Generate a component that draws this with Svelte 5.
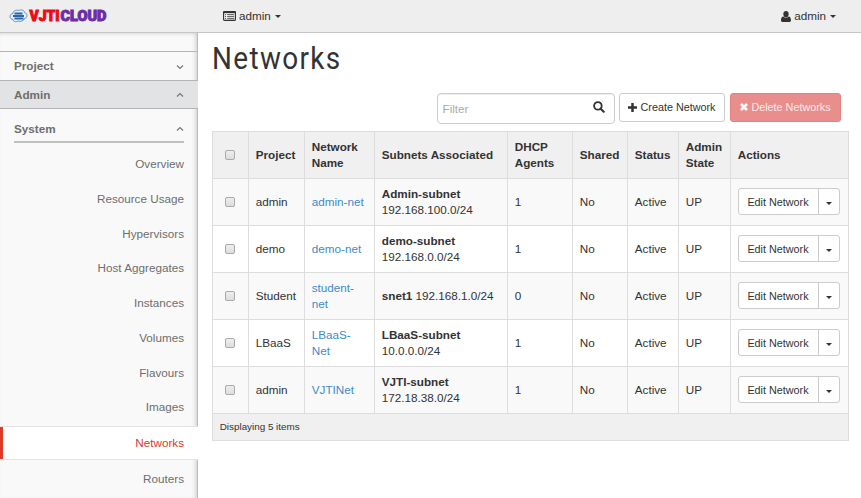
<script>
  const items = ['Overview', 'Resource Usage', 'Hypervisors', 'Host Aggregates', 'Instances', 'Volumes', 'Flavours', 'Images', 'Networks', 'Routers'];
  const widths = [36, 56, 70, 133, 65, 55, 51, 52, 118];
  const heads = ['Project', 'Network Name', 'Subnets Associated', 'DHCP Agents', 'Shared', 'Status', 'Admin State', 'Actions'];
  const rows = [
    { project: 'admin', name: 'admin-net', subnet: 'Admin-subnet', ip: '192.168.100.0/24', agents: 1 },
    { project: 'demo', name: 'demo-net', subnet: 'demo-subnet', ip: '192.168.0.0/24', agents: 1 },
    { project: 'Student', name: 'student-net', subnet: 'snet1', ip: '192.168.1.0/24', agents: 0 },
    { project: 'LBaaS', name: 'LBaaS-Net', subnet: 'LBaaS-subnet', ip: '10.0.0.0/24', agents: 1 },
    { project: 'admin', name: 'VJTINet', subnet: 'VJTI-subnet', ip: '172.18.38.0/24', agents: 1 }
  ];
</script>

{#snippet chevron(up)}
  <svg class="chev" width="8" height="6" viewBox="0 0 8 6"><path d={up ? 'M1 4.5 L4 1.5 L7 4.5' : 'M1 1.5 L4 4.5 L7 1.5'} /></svg>
{/snippet}

<div class="page">
  <header>
    <svg class="logo" width="100" height="24" viewBox="0 0 100 24">
      <path class="cloud" d="M4 15.5 C0 15 0 10 4 9.5 C4 7 7 5.5 9.5 6.5 C12.5 5 15.5 6.5 15.5 8.5 C19 9.5 18.5 14 15.5 14.5 C15 17 11 18 9 17 C7 18.5 4 17.5 4 15.5 Z" />
      <path class="lines" d="M5.5 9.5h8 M4 12h11 M5.5 14.5h9" />
      <text x="20.5" y="17.3" textLength="30" lengthAdjust="spacingAndGlyphs" fill="#f00812" stroke="#f00812">VJTI</text>
      <text x="51.5" y="17.3" textLength="46" lengthAdjust="spacingAndGlyphs" fill="#6c2da5" stroke="#6c2da5">CLOUD</text>
    </svg>
    <div class="tenant">
      <svg width="13" height="10" viewBox="0 0 13 10"><rect x=".6" y=".6" width="11.8" height="8.8" rx="1" fill="#fff" stroke="#333" stroke-width="1.2" /><path d="M0 1.3h13" stroke="#333" stroke-width="1.8" /><path d="M2 3.7h1.2M4.2 3.7h7M2 5.7h1.2M4.2 5.7h7M2 7.7h1.2M4.2 7.7h7" stroke="#333" stroke-width=".9" /></svg>
      <span>admin</span><i class="caret"></i>
    </div>
    <div class="user">
      <svg width="10" height="11" viewBox="0 0 10 10" preserveAspectRatio="none"><path fill="#333" d="M5 0C6.6 0 7.7 1.1 7.7 2.8 7.7 4.4 6.6 6 5 6S2.3 4.4 2.3 2.8C2.3 1.1 3.4 0 5 0ZM2.4 5C3.7 6.7 6.3 6.7 7.6 5 9.3 5.2 10 6.4 10 8.4 10 9.5 9.3 10 8.3 10H1.7C.7 10 0 9.5 0 8.4 0 6.4.7 5.2 2.4 5Z" /></svg>
      <span>admin</span><i class="caret"></i>
    </div>
  </header>
  <div class="body">
    <nav>
      <div class="group project"><span>Project</span>{@render chevron(false)}</div>
      <div class="group admin"><span>Admin</span>{@render chevron(true)}</div>
      <div class="system"><span>System</span>{@render chevron(true)}</div>
      <ul>
        {#each items as item}
          <li class:active={item === 'Networks'}>{item}</li>
        {/each}
      </ul>
    </nav>
    <main>
      <h1>Networks</h1>
      <div class="tools">
        <div class="filter"><span>Filter</span>
          <svg width="12" height="12" viewBox="0 0 12 12"><circle cx="4.9" cy="4.9" r="3.8" fill="none" stroke="#333" stroke-width="1.8" /><path d="M7.7 7.7 L10.7 10.7" stroke="#333" stroke-width="2.1" stroke-linecap="round" /></svg>
        </div>
        <button class="create"><svg width="9" height="9" viewBox="0 0 9 9"><path d="M4.5 0v9M0 4.5h9" stroke="#333" stroke-width="2.5" /></svg>Create Network</button>
        <button class="delete"><svg width="8" height="8" viewBox="0 0 8 8"><path d="M1 1l6 6M7 1l-6 6" stroke="#fff" stroke-width="2.6" /></svg>Delete Networks</button>
      </div>
      <table>
        <colgroup>{#each widths as w}<col style="width:{w}px" />{/each}</colgroup>
        <thead>
          <tr><th class="check"><i class="box"></i></th>{#each heads as h}<th>{h}</th>{/each}</tr>
        </thead>
        <tbody>
          {#each rows as r}
            <tr>
              <td class="check"><i class="box"></i></td>
              <td>{r.project}</td>
              <td class="link">{r.name}</td>
              <td><b>{r.subnet}</b> {r.ip}</td>
              <td>{r.agents}</td>
              <td>No</td>
              <td>Active</td>
              <td>UP</td>
              <td class="actions"><div class="split"><span>Edit Network</span><span class="drop"><i class="caret"></i></span></div></td>
            </tr>
          {/each}
        </tbody>
        <tfoot><tr><td colspan="9">Displaying 5 items</td></tr></tfoot>
      </table>
    </main>
  </div>
</div>

<style>
  :global(body) { margin: 0; background: #fff; }
  .page { width: 861px; height: 498px; overflow: hidden; display: flex; flex-direction: column; font: 11.7px/16px "Liberation Sans", Arial, sans-serif; color: #333; }
  .page * { box-sizing: border-box; }
  svg { flex: none; }
  header { height: 33px; flex: none; background: #eee; border-bottom: 1px solid #c6c6c6; display: flex; align-items: center; padding: 0 25px 0 9px; }
  .logo { margin-right: 114px; overflow: visible; }
  .logo text { font: 900 15px/16px Roboto, sans-serif; stroke-width: 1; }
  .cloud { fill: #e6eef8; stroke: #5f91c6; stroke-width: 1; }
  .lines { stroke: #2866ae; stroke-width: 1.8; }
  .tenant, .user { display: flex; align-items: center; gap: 3px; }
  .user { margin-left: auto; }
  .caret { width: 0; height: 0; border: 3px solid transparent; border-top-color: #333; border-bottom: 0; }
  header .caret { margin-left: 1px; }
  .body { flex: 1; min-height: 0; display: flex; }
  nav { width: 198px; flex: none; background: #f9f9f9; border-right: 1px solid #bbb; box-shadow: inset -4px 0 5px -3px #ccc, inset 0 3px 4px -3px #ccc; padding-top: 18px; color: #6e6e6e; }
  .group, .system { display: flex; align-items: center; justify-content: space-between; font-weight: bold; }
  .group { padding: 0 13px 0 14px; border-top: 1px solid #b5b5b5; }
  .project { height: 29px; }
  .project .chev { margin-top: 2px; }
  .admin { height: 29px; margin-right: -1px; padding-right: 14px; background: #e2e3e5; border-bottom: 1px solid #b5b5b5; }
  .system { height: 34px; margin: 0 13px 0 14px; padding-top: 8px; border-bottom: 2px solid #bfc1c0; }
  .chev { fill: none; stroke: #777; stroke-width: 1.2; }
  ul { list-style: none; margin: 0; padding: 4px 0 0; }
  li { height: 34.75px; line-height: 34.75px; padding-right: 13px; text-align: right; }
  li.active { height: 34px; line-height: 31px; margin: 1px -1px 2px 0; padding-right: 14px; background: #fff; color: #d9392b; border: solid #e3e3e3; border-width: 1px 0; box-shadow: inset 3px 0 #dd3b28; }
  main { padding-left: 14px; flex: 1; min-width: 0; }
  h1 { width: max-content; margin: 7px 0 0; font: 400 31px/38px Roboto, sans-serif; letter-spacing: 1.5px; transform: scaleX(.9); transform-origin: 0 0; }
  .tools { height: 53px; padding: 15px 20px 0 225px; display: flex; align-items: flex-start; }
  .filter { width: 178px; height: 31px; border: 1px solid #ccc; border-radius: 4px; padding: 0 9px 0 4.5px; display: flex; align-items: center; justify-content: space-between; color: #aaa; box-shadow: inset 0 1px 1px rgba(0, 0, 0, .075); }
  .filter svg { margin-top: -3px; }
  button { height: 29px; border: 1px solid #ccc; border-radius: 3px; background: #fff; color: #333; padding: 0 0 1px; display: flex; align-items: center; justify-content: center; font: 10.8px "Liberation Sans", Arial, sans-serif; white-space: nowrap; gap: 3px; }
  .create { width: 106px; margin-left: 4px; }
  .delete { width: 111px; margin-left: 5px; background: #e88f8d; border-color: #e48380; color: #fbe9e9; }
  table { width: 637px; table-layout: fixed; border-collapse: collapse; }
  th, td { border: 1px solid #ddd; height: 47px; padding: 0 6.75px; text-align: left; vertical-align: middle; }
  thead tr, tfoot tr { background: #f0f0f0; }
  tbody tr:nth-child(odd) { background: #f9f9f9; }
  .check { padding: 0 0 0 12px; }
  .box { display: block; width: 10px; height: 10px; border: 1px solid #aaa; border-radius: 2px; background: linear-gradient(#eee, #ddd); }
  .link { color: #428bca; }
  .actions { padding: 0 7px 1px; }
  .split { width: 102px; height: 27px; border: 1px solid #ccc; border-radius: 3px; background: #fff; display: flex; align-items: center; font-size: 10.8px; }
  .split > span:first-child { flex: 1; text-align: center; padding: 1px 1px 0 0; }
  .drop { width: 21px; height: 100%; border-left: 1px solid #ccc; display: flex; align-items: center; justify-content: center; padding-top: 4px; }
  tfoot td { height: 27px; font-size: 9.85px; }
</style>
